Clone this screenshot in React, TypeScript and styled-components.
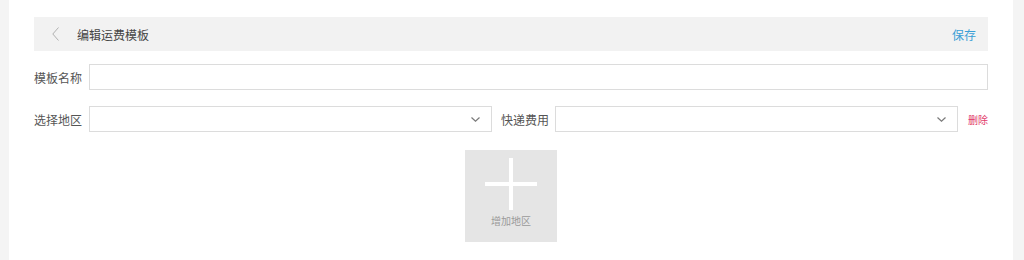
import React from "react";
import styled, { createGlobalStyle } from "styled-components";

const Global = createGlobalStyle`
  html, body { margin: 0; padding: 0; background: #f4f4f4; }
  body { font-family: "Noto Sans CJK SC", "Noto Sans", sans-serif; font-size: 12px; color: #555; }
  * { box-sizing: border-box; }
`;

const Panel = styled.div`
  margin: 0 11px 0 9px;
  background: #ffffff;
  min-height: 260px;
  padding: 17px 25px 20px;
`;

const Header = styled.div`
  height: 34px;
  background: #f2f2f2;
  display: flex;
  align-items: center;
  padding: 0 12px 0 18px;
`;

const Back = styled.span`
  display: flex;
  width: 7px;
  height: 14px;
  margin-right: 18px;
`;

const Title = styled.span`
  flex: 1;
  color: #444;
  font-size: 12px;
`;

const Save = styled.span`
  color: #3a9fd6;
  font-size: 12px;
  cursor: pointer;
`;

const Row = styled.div<{ $top: number }>`
  display: flex;
  align-items: center;
  margin-top: ${(p) => p.$top}px;
  height: 26px;
`;

const Label = styled.span<{ $ml?: number; $mr?: number }>`
  flex: none;
  margin-left: ${(p) => p.$ml ?? 0}px;
  margin-right: ${(p) => p.$mr ?? 7}px;
  color: #555;
  font-size: 12px;
  white-space: nowrap;
`;

const Input = styled.div`
  flex: 1;
  height: 26px;
  border: 1px solid #dcdcdc;
  background: #fff;
`;

const Select = styled.div`
  flex: 1;
  height: 26px;
  border: 1px solid #dcdcdc;
  background: #fff;
  display: flex;
  align-items: center;
  justify-content: flex-end;
  padding-right: 11px;
`;

const Delete = styled.span`
  flex: none;
  margin-left: 10px;
  color: #e23a6a;
  font-size: 10px;
  cursor: pointer;
`;

const AddBox = styled.div`
  width: 92px;
  height: 92px;
  margin: 18px auto 0;
  background: #e5e5e5;
  display: flex;
  flex-direction: column;
  align-items: center;
  padding-top: 8px;
`;

const AddText = styled.span`
  margin-top: 4px;
  font-size: 10px;
  line-height: 14px;
  color: #9a9a9a;
`;

const Chevron = () => (
  <svg width="9" height="5" viewBox="0 0 9 5">
    <path d="M0.5 0.5 L4.5 4.2 L8.5 0.5" fill="none" stroke="#7a7a7a" strokeWidth="1.2" />
  </svg>
);

export default function App() {
  return (
    <>
      <Global />
      <Panel>
        <Header>
          <Back>
            <svg width="7" height="14" viewBox="0 0 7 14">
              <path d="M6.5 0.5 L0.8 7 L6.5 13.5" fill="none" stroke="#b0b0b0" strokeWidth="1" />
            </svg>
          </Back>
          <Title>编辑运费模板</Title>
          <Save>保存</Save>
        </Header>
        <Row $top={13}>
          <Label>模板名称</Label>
          <Input />
        </Row>
        <Row $top={16}>
          <Label>选择地区</Label>
          <Select>
            <Chevron />
          </Select>
          <Label $ml={9} $mr={6}>快递费用</Label>
          <Select>
            <Chevron />
          </Select>
          <Delete>删除</Delete>
        </Row>
        <AddBox>
          <svg width="52" height="52" viewBox="0 0 52 52">
            <rect x="0" y="24" width="52" height="4" fill="#ffffff" />
            <rect x="24" y="0" width="4" height="52" fill="#ffffff" />
          </svg>
          <AddText>增加地区</AddText>
        </AddBox>
      </Panel>
    </>
  );
}
